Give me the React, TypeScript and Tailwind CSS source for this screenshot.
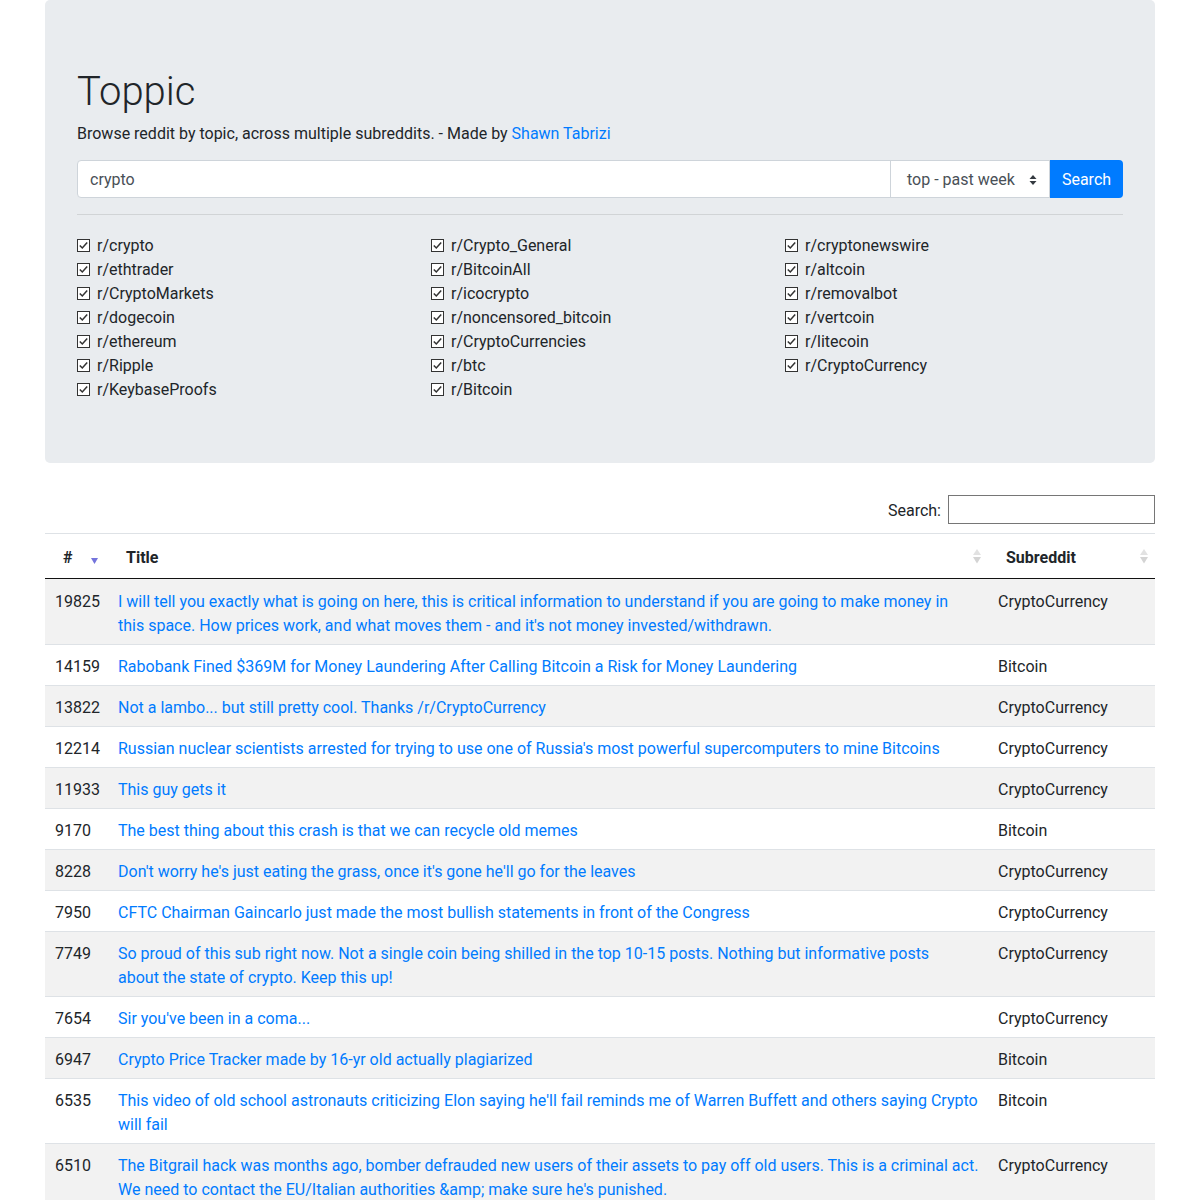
import React from 'react';

const subs = [
  ['r/crypto', 'r/Crypto_General', 'r/cryptonewswire'],
  ['r/ethtrader', 'r/BitcoinAll', 'r/altcoin'],
  ['r/CryptoMarkets', 'r/icocrypto', 'r/removalbot'],
  ['r/dogecoin', 'r/noncensored_bitcoin', 'r/vertcoin'],
  ['r/ethereum', 'r/CryptoCurrencies', 'r/litecoin'],
  ['r/Ripple', 'r/btc', 'r/CryptoCurrency'],
  ['r/KeybaseProofs', 'r/Bitcoin', ''],
];

type Post = { score: number; title: string[]; sub: string };

const posts: Post[] = [
  {
    score: 19825,
    title: [
      'I will tell you exactly what is going on here, this is critical information to understand if you are going to make money in',
      'this space. How prices work, and what moves them - and it\'s not money invested/withdrawn.',
    ],
    sub: 'CryptoCurrency',
  },
  { score: 14159, title: ['Rabobank Fined $369M for Money Laundering After Calling Bitcoin a Risk for Money Laundering'], sub: 'Bitcoin' },
  { score: 13822, title: ['Not a lambo... but still pretty cool. Thanks /r/CryptoCurrency'], sub: 'CryptoCurrency' },
  {
    score: 12214,
    title: ["Russian nuclear scientists arrested for trying to use one of Russia's most powerful supercomputers to mine Bitcoins"],
    sub: 'CryptoCurrency',
  },
  { score: 11933, title: ['This guy gets it'], sub: 'CryptoCurrency' },
  { score: 9170, title: ['The best thing about this crash is that we can recycle old memes'], sub: 'Bitcoin' },
  { score: 8228, title: ["Don't worry he's just eating the grass, once it's gone he'll go for the leaves"], sub: 'CryptoCurrency' },
  { score: 7950, title: ['CFTC Chairman Gaincarlo just made the most bullish statements in front of the Congress'], sub: 'CryptoCurrency' },
  {
    score: 7749,
    title: [
      'So proud of this sub right now. Not a single coin being shilled in the top 10-15 posts. Nothing but informative posts',
      'about the state of crypto. Keep this up!',
    ],
    sub: 'CryptoCurrency',
  },
  { score: 7654, title: ["Sir you've been in a coma..."], sub: 'CryptoCurrency' },
  { score: 6947, title: ['Crypto Price Tracker made by 16-yr old actually plagiarized'], sub: 'Bitcoin' },
  {
    score: 6535,
    title: [
      "This video of old school astronauts criticizing Elon saying he'll fail reminds me of Warren Buffett and others saying Crypto",
      'will fail',
    ],
    sub: 'Bitcoin',
  },
  {
    score: 6510,
    title: [
      'The Bitgrail hack was months ago, bomber defrauded new users of their assets to pay off old users. This is a criminal act.',
      "We need to contact the EU/Italian authorities &amp; make sure he's punished.",
    ],
    sub: 'CryptoCurrency',
  },
];

const CheckBox = () => (
  <svg width="13" height="13" viewBox="0 0 13 13" className="shrink-0">
    <rect x="0.5" y="0.5" width="12" height="12" fill="#fff" stroke="#333" />
    <path d="M2.8 6.4 L5.3 9 L10.2 3.4" fill="none" stroke="#333" strokeWidth="1.5" />
  </svg>
);

const SortBoth = () => (
  <svg width="8" height="15" viewBox="0 0 8 15" className="absolute right-[7px] top-[15px]">
    <path d="M4 0 L8 6 L0 6 Z" fill="#e2e2e2" />
    <path d="M0 8 L8 8 L4 14.5 Z" fill="#d4d4d4" />
  </svg>
);

const SortDesc = () => (
  <svg width="7" height="6" viewBox="0 0 7 6" className="absolute right-[10px] top-[24px]">
    <path d="M0 0 L7 0 L3.5 6 Z" fill="#7474dc" />
  </svg>
);

export default function App() {
  return (
    <div className="min-h-[1200px] bg-white text-[16px] leading-6 text-[#212529] font-['Roboto',sans-serif]">
      <div className="mx-auto w-[1110px]">
        <div className="mb-8 rounded-[5px] bg-[#e9ecef] px-8 pt-16 pb-[62px]">
          <h1 className="mt-[4px] mb-[6px] text-[40px] font-light leading-[48px]">Toppic</h1>
          <p className="mb-[14px]">
            Browse reddit by topic, across multiple subreddits. - Made by{' '}
            <a href="#" className="text-[#007bff]">
              Shawn Tabrizi
            </a>
          </p>
          <div className="flex h-[38px]">
            <div className="flex flex-1 items-center rounded-l-[4px] border border-[#ced4da] bg-white px-3 pt-[2px] text-[#495057]">
              crypto
            </div>
            <div className="-ml-px flex w-[160px] items-center justify-between border border-[#ced4da] bg-white pl-4 pr-3 pt-[2px] text-[#495057]">
              <span>top - past week</span>
              <svg width="8" height="12" viewBox="0 0 8 12">
                <path d="M4 1 L7.5 5 L0.5 5 Z M0.5 7 L7.5 7 L4 11 Z" fill="#343a40" />
              </svg>
            </div>
            <button className="flex w-[73px] items-center justify-center rounded-r-[4px] bg-[#007bff] pt-[2px] text-white">
              Search
            </button>
          </div>
          <hr className="my-4 border-t border-[rgba(0,0,0,0.1)]" />
          <div className="grid grid-cols-[354px_354px_1fr] pt-[2px]">
            {subs.flat().map((s, i) =>
              s ? (
                <label key={i} className="flex h-6 items-center gap-[7px]">
                  <CheckBox />
                  <span className="pt-[2px]">{s}</span>
                </label>
              ) : (
                <div key={i} />
              ),
            )}
          </div>
        </div>

        <div className="mb-[9px] flex items-center justify-end gap-[7px]">
          <span className="pt-[2px]">Search:</span>
          <div className="h-[29px] w-[207px] border border-[#767676] bg-white" />
        </div>

        <table className="w-full table-fixed border-collapse">
          <colgroup>
            <col className="w-[63px]" />
            <col className="w-[880px]" />
            <col className="w-[167px]" />
          </colgroup>
          <thead>
            <tr className="border-t border-[#dee2e6]">
              <th className="relative border-b border-[#111] pt-[12px] pb-[8px] pl-[18px] text-left font-bold">
                #
                <SortDesc />
              </th>
              <th className="relative border-b border-[#111] pt-[12px] pb-[8px] pl-[18px] text-left font-bold">
                Title
                <SortBoth />
              </th>
              <th className="relative border-b border-[#111] pt-[12px] pb-[8px] pl-[18px] text-left font-bold">
                Subreddit
                <SortBoth />
              </th>
            </tr>
          </thead>
          <tbody>
            {posts.map((p, i) => {
              const cell = i === 0 ? 'px-[10px] pt-[11px] pb-[6px]' : 'px-[10px] pt-[10px] pb-[6px]';
              return (
                <tr
                  key={p.score}
                  className={`border-t border-[#dee2e6] align-top ${i % 2 === 0 ? 'bg-[#f2f2f2]' : 'bg-white'}`}
                >
                  <td className={cell}>{p.score}</td>
                  <td className={cell}>
                    <a href="#" className="whitespace-nowrap text-[#007bff]">
                      {p.title.map((line, j) => (
                        <React.Fragment key={j}>
                          {j > 0 && <br />}
                          {line}
                        </React.Fragment>
                      ))}
                    </a>
                  </td>
                  <td className={cell}>{p.sub}</td>
                </tr>
              );
            })}
          </tbody>
        </table>
      </div>
    </div>
  );
}
